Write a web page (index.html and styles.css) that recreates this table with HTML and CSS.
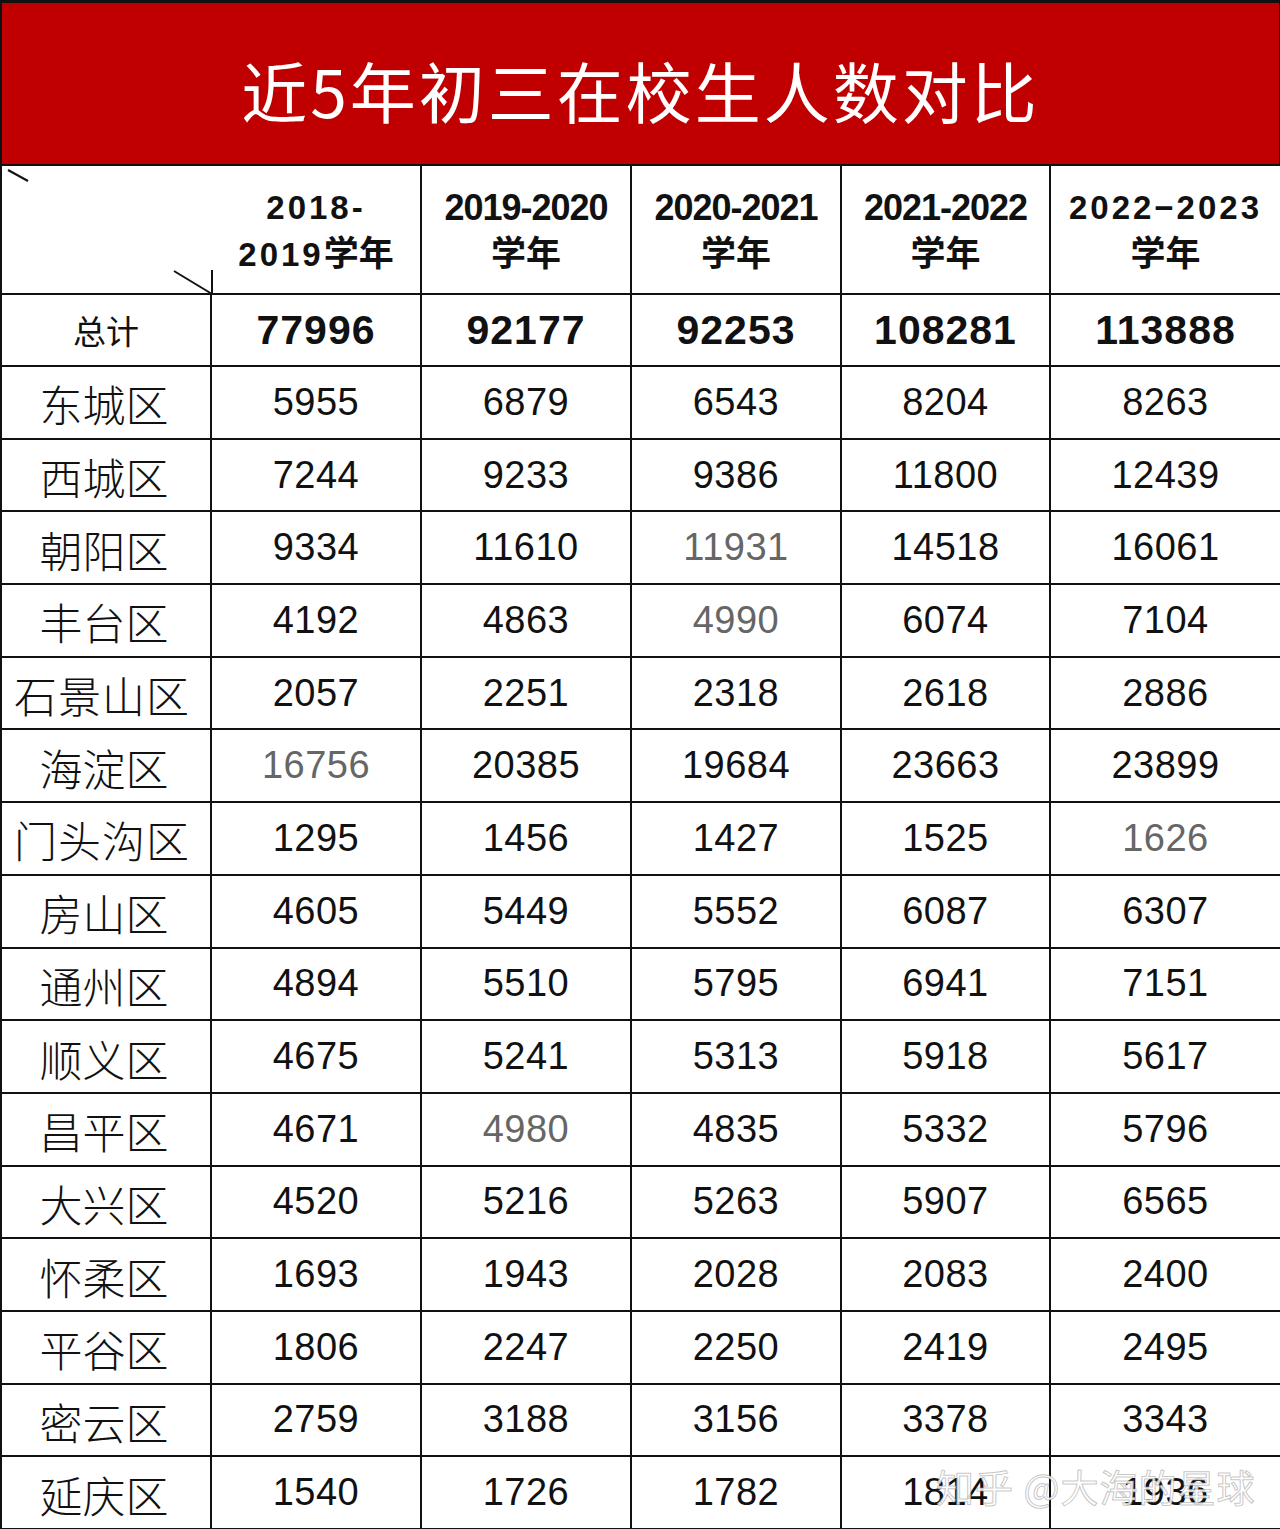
FILE: index.html
```html
<!DOCTYPE html>
<html lang="zh">
<head>
<meta charset="utf-8">
<title>近5年初三在校生人数对比</title>
<link rel="stylesheet" href="styles.css">
</head>
<body>
<div class="sheet">
  <div class="title"><span>近5年初三在校生人数对比</span></div>

  <div class="cell corner">
    <svg class="diag" width="212" height="129" viewBox="0 0 212 129">
      <line x1="6" y1="4" x2="26" y2="15" stroke="#111" stroke-width="2"/>
      <line x1="172" y1="105" x2="210" y2="128" stroke="#111" stroke-width="2"/>
      <line x1="210" y1="104" x2="210" y2="129" stroke="#111" stroke-width="2"/>
    </svg>
  </div>
  <div class="cell head head-alt"><div>2018-<br>2019<span class="cjk">学年</span></div></div>
  <div class="cell head"><div>2019-2020<br><span class="cjk">学年</span></div></div>
  <div class="cell head"><div>2020-2021<br><span class="cjk">学年</span></div></div>
  <div class="cell head"><div>2021-2022<br><span class="cjk">学年</span></div></div>
  <div class="cell head head-alt"><div>2022−2023<br><span class="cjk">学年</span></div></div>

  <div class="cell total-label">总计</div>
  <div class="cell total">77996</div>
  <div class="cell total">92177</div>
  <div class="cell total">92253</div>
  <div class="cell total">108281</div>
  <div class="cell total">113888</div>

  <div class="cell name">东城区</div><div class="cell num">5955</div><div class="cell num">6879</div><div class="cell num">6543</div><div class="cell num">8204</div><div class="cell num">8263</div>
  <div class="cell name">西城区</div><div class="cell num">7244</div><div class="cell num">9233</div><div class="cell num">9386</div><div class="cell num">11800</div><div class="cell num">12439</div>
  <div class="cell name">朝阳区</div><div class="cell num">9334</div><div class="cell num">11610</div><div class="cell num faded">11931</div><div class="cell num">14518</div><div class="cell num">16061</div>
  <div class="cell name">丰台区</div><div class="cell num">4192</div><div class="cell num">4863</div><div class="cell num faded">4990</div><div class="cell num">6074</div><div class="cell num">7104</div>
  <div class="cell name wide">石景山区</div><div class="cell num">2057</div><div class="cell num">2251</div><div class="cell num">2318</div><div class="cell num">2618</div><div class="cell num">2886</div>
  <div class="cell name">海淀区</div><div class="cell num faded">16756</div><div class="cell num">20385</div><div class="cell num">19684</div><div class="cell num">23663</div><div class="cell num">23899</div>
  <div class="cell name wide">门头沟区</div><div class="cell num">1295</div><div class="cell num">1456</div><div class="cell num">1427</div><div class="cell num">1525</div><div class="cell num faded">1626</div>
  <div class="cell name">房山区</div><div class="cell num">4605</div><div class="cell num">5449</div><div class="cell num">5552</div><div class="cell num">6087</div><div class="cell num">6307</div>
  <div class="cell name">通州区</div><div class="cell num">4894</div><div class="cell num">5510</div><div class="cell num">5795</div><div class="cell num">6941</div><div class="cell num">7151</div>
  <div class="cell name">顺义区</div><div class="cell num">4675</div><div class="cell num">5241</div><div class="cell num">5313</div><div class="cell num">5918</div><div class="cell num">5617</div>
  <div class="cell name">昌平区</div><div class="cell num">4671</div><div class="cell num faded">4980</div><div class="cell num">4835</div><div class="cell num">5332</div><div class="cell num">5796</div>
  <div class="cell name">大兴区</div><div class="cell num">4520</div><div class="cell num">5216</div><div class="cell num">5263</div><div class="cell num">5907</div><div class="cell num">6565</div>
  <div class="cell name">怀柔区</div><div class="cell num">1693</div><div class="cell num">1943</div><div class="cell num">2028</div><div class="cell num">2083</div><div class="cell num">2400</div>
  <div class="cell name">平谷区</div><div class="cell num">1806</div><div class="cell num">2247</div><div class="cell num">2250</div><div class="cell num">2419</div><div class="cell num">2495</div>
  <div class="cell name">密云区</div><div class="cell num">2759</div><div class="cell num">3188</div><div class="cell num">3156</div><div class="cell num">3378</div><div class="cell num">3343</div>
  <div class="cell name">延庆区</div><div class="cell num">1540</div><div class="cell num">1726</div><div class="cell num">1782</div><div class="cell num">1814</div><div class="cell num">1936</div>

  <div class="watermark">知乎 @大海的星球</div>
</div>
</body>
</html>
```

FILE: styles.css
```css
html, body {
  margin: 0;
  padding: 0;
  background: #ffffff;
}

.sheet {
  position: relative;
  width: 1280px;
  box-sizing: border-box;
  display: grid;
  grid-template-columns: 210px 210px 210px 210px 209px 231px;
  grid-template-rows: 163px 129px 72px repeat(16, 72.69px);
  border-left: 2px solid #111;
  border-top: 3px solid #111;
  font-family: "Liberation Sans", "Noto Sans CJK SC", sans-serif;
  color: #111;
}

.title {
  grid-column: 1 / -1;
  background: #c00000;
  border-right: 3px solid #111;
  border-bottom: 2px solid #111;
  display: flex;
  align-items: center;
  justify-content: center;
  padding-top: 10px;
  box-sizing: border-box;
}

.title span {
  color: #ffffff;
  font-family: "Noto Sans CJK SC", sans-serif;
  font-size: 66px;
  font-weight: 400;
  letter-spacing: 3px;
  line-height: 1;
}

.cell {
  box-sizing: border-box;
  border-right: 2px solid #111;
  border-bottom: 2px solid #111;
  display: flex;
  align-items: center;
  justify-content: center;
  text-align: center;
  white-space: nowrap;
}

.corner {
  position: relative;
  border-right: none;
}

.diag {
  position: absolute;
  left: 0;
  top: 0;
}

.head {
  font-family: "Liberation Sans", "Noto Sans CJK SC", sans-serif;
  font-weight: 700;
  font-size: 36px;
  line-height: 43px;
  letter-spacing: -1px;
  padding-top: 2px;
}

.head-alt {
  font-size: 33px;
  letter-spacing: 3px;
}

.cjk {
  font-family: "Noto Sans CJK SC", sans-serif;
  font-weight: 700;
  letter-spacing: 0;
  font-size: 35px;
}

.total-label {
  font-family: "Noto Sans CJK SC", sans-serif;
  font-size: 33px;
  font-weight: 400;
}

.total {
  font-family: "Liberation Sans", sans-serif;
  font-weight: 700;
  font-size: 41px;
  letter-spacing: 1px;
}

.name {
  font-family: "Noto Sans CJK SC", sans-serif;
  font-size: 43px;
  font-weight: 300;
  padding-top: 2px;
  padding-right: 4px;
}

.name.wide {
  letter-spacing: 1px;
  font-size: 43px;
  justify-content: flex-start;
  padding-left: 12px;
  padding-right: 0;
}

.num {
  font-family: "Liberation Sans", sans-serif;
  font-size: 38px;
  font-weight: 400;
  letter-spacing: 0.5px;
}

.faded {
  color: #666;
}

.watermark {
  position: absolute;
  left: 934px;
  top: 1455px;
  font-family: "Noto Sans CJK SC", sans-serif;
  font-size: 38px;
  letter-spacing: 1px;
  color: rgba(255, 255, 255, 0.85);
  -webkit-text-stroke: 1px rgba(150, 150, 150, 0.55);
  white-space: nowrap;
}
```
